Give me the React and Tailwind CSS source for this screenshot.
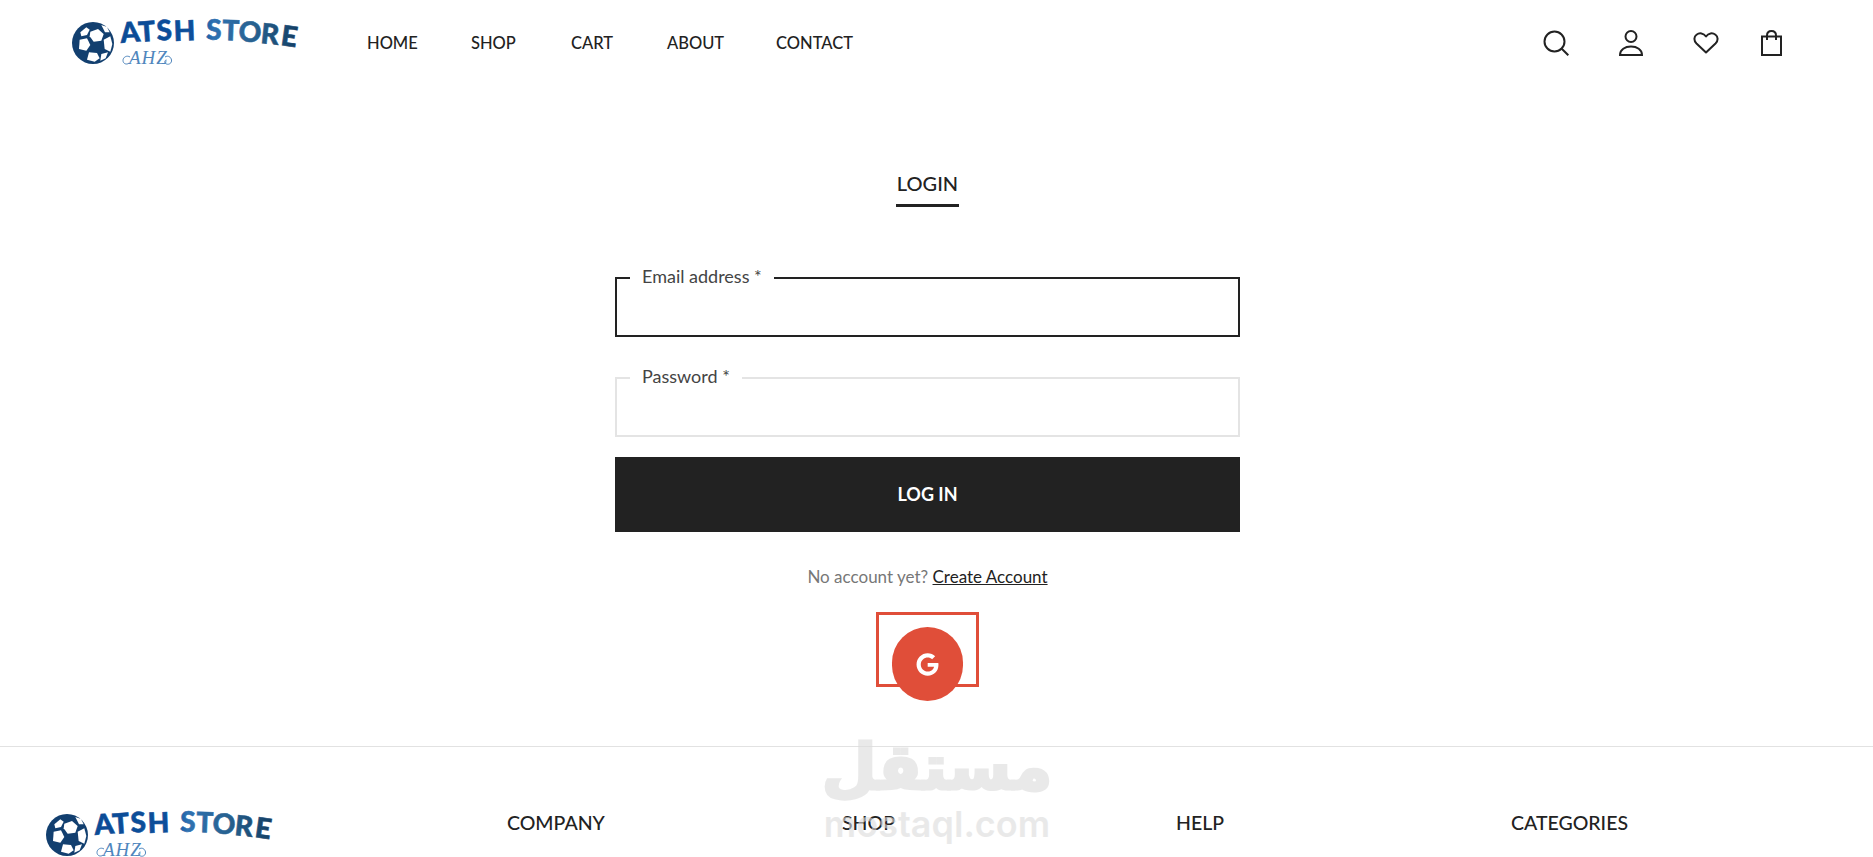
import { FaGoogle } from "react-icons/fa";

const Logo = ({ id, className }) => (
  <svg viewBox="0 0 240 60" className={className}>
    <defs>
      <linearGradient id={id} gradientUnits="userSpaceOnUse" x1="50" x2="230" y1="0" y2="0">
        <stop offset="0" stopColor="#0b4b96" />
        <stop offset="0.45" stopColor="#0d4f9b" />
        <stop offset="0.52" stopColor="#2f72b2" />
        <stop offset="0.75" stopColor="#27618f" />
        <stop offset="1" stopColor="#123d63" />
      </linearGradient>
    </defs>
    <circle cx="23" cy="30" r="21" fill="#123f6f" />
    <g transform="translate(23 30) scale(0.3333) translate(-80 -72)" fill="#fff">
      <polygon points="72,38 95,30 112,45 105,65 82,68 70,52" />
      <polygon points="42,40 60,25 70,32 62,48 45,52" />
      <polygon points="40,62 62,58 72,78 60,95 38,90" />
      <polygon points="68,100 92,102 100,118 85,128 62,122" />
      <polygon points="112,62 132,52 138,75 132,98 115,90" />
      <polygon points="105,18 122,24 130,40 116,40" />
      <polygon points="105,105 125,100 118,118 102,125" />
    </g>
    <text
      x="51 69 87 104 136 152 168 190 210"
      y="30 29 27.500 28 26.500 27 28 30 32"
      rotate="-5 -4 -3 -2 1 2 4 6 8"
      fill={`url(#${id})`}
      stroke={`url(#${id})`}
      strokeWidth="0.6"
      fontFamily="Lato, sans-serif"
      fontWeight="900"
      fontSize="28"
    >
      ATSHSTORE
    </text>
    <path
      d="M60 44c-3-2-7 0-7 3.500s4 4.500 6 2.500M95 44c3-2 6 0 6.500 3s-2.500 5-5 4-2-4 0-4"
      fill="none"
      stroke="#4f86bd"
      strokeWidth="1"
    />
    <text x="59" y="51" fill="#4f86bd" fontFamily="'Liberation Serif', serif" fontStyle="italic" fontSize="19" letterSpacing="1">
      AHZ
    </text>
  </svg>
);

const SearchIcon = () => (
  <svg width="26" height="26" viewBox="0 0 26 26" fill="none" stroke="#222" strokeWidth="2">
    <circle cx="11.500" cy="11.500" r="10" />
    <path d="M18.500 18.500l6.800 6.800" />
  </svg>
);

const UserIcon = () => (
  <svg width="24" height="26" viewBox="0 0 24 26" fill="none" stroke="#222" strokeWidth="2">
    <circle cx="12" cy="6.500" r="5.500" />
    <path d="M1 25c0-5.500 5-8.500 11-8.500s11 3 11 8.500z" />
  </svg>
);

const HeartIcon = () => (
  <svg width="26" height="22" viewBox="0 0 26 22" fill="none" stroke="#222" strokeWidth="2" strokeLinejoin="round">
    <path d="M13 20.500L3.500 11.500C0.500 8.500 1 4.500 3.500 2.700 6.500 0.500 10.500 1 13 4.500c2.500-3.500 6.500-4 9.500-1.800 2.500 1.800 3 5.800 0 8.800z" />
  </svg>
);

const BagIcon = () => (
  <svg width="21" height="26" viewBox="0 0 21 26" fill="none" stroke="#222" strokeWidth="2">
    <rect x="1" y="6.500" width="19" height="18.500" />
    <path d="M6 10V5.500C6 2.800 7.800 1 10.500 1S15 2.800 15 5.500V10" />
  </svg>
);

const navLinks = [
  { label: "HOME", cls: "w-[104px]" },
  { label: "SHOP", cls: "w-[100px]" },
  { label: "CART", cls: "w-[96px]" },
  { label: "ABOUT", cls: "w-[109px]" },
  { label: "CONTACT", cls: "" },
];

const Field = ({ label, active }) => (
  <div className={`relative h-[60px] border-2 ${active ? "border-[#222]" : "border-[#e4e4e4]"}`}>
    <span className="absolute left-[13px] -top-[15px] bg-white px-[12px] text-[18px] leading-[24px] text-[#444]">
      {label}
    </span>
  </div>
);

const App = () => {
  return (
    <div className="relative h-[857px] overflow-hidden bg-white font-['Lato',sans-serif] text-[#222]">
      {/* Header */}
      <header className="flex h-[86px] items-center pl-[70px] pr-[91px]">
        <Logo id="logoTop" className="h-[60px] w-[240px] shrink-0" />
        <nav className="ml-[57px] flex text-[16.500px] font-medium">
          {navLinks.map((link) => (
            <a key={link.label} href="#" className={link.cls}>
              {link.label}
            </a>
          ))}
        </nav>
        <div className="ml-auto flex items-center">
          <div className="flex w-[76px]"><SearchIcon /></div>
          <div className="flex w-[74px]"><UserIcon /></div>
          <div className="flex w-[68px]"><HeartIcon /></div>
          <BagIcon />
        </div>
      </header>

      {/* Login form */}
      <main className="flex h-[661px] flex-col items-center border-b border-[#e2e2e2] pr-[18px]">
        <div className="mt-[83px] w-[63px] border-b-[3px] border-[#222] pb-[7px] text-center text-[20px] leading-[28px] font-medium">
          LOGIN
        </div>
        <div className="mt-[70px] flex w-[625px] flex-col">
          <Field label="Email address *" active />
          <div className="mt-[40px]">
            <Field label="Password *" />
          </div>
          <button className="mt-[20px] h-[75px] bg-[#222] text-[18px] font-bold text-white">
            LOG IN
          </button>
          <p className="mt-[32px] text-center text-[17px] leading-[26px] text-[#777]">
            No account yet?{" "}
            <a href="#" className="text-[#222] underline">Create Account</a>
          </p>
          <div className="mt-[22px] flex justify-center">
            <div className="relative h-[75px] w-[103px] border-[3px] border-[#e04e39]">
              <div className="absolute left-[13px] top-[12px] flex h-[74px] w-[71px] items-center justify-center rounded-full bg-[#e04e39] text-white">
                <FaGoogle size={23} />
              </div>
            </div>
          </div>
        </div>
      </main>

      {/* Footer */}
      <footer className="relative flex pl-[44px] pt-[58px]">
        <Logo id="logoBottom" className="h-[60px] w-[240px] shrink-0" />
        <div className="ml-[223px] flex pt-[4px] text-[19.500px] leading-[28px] font-medium">
          <h4 className="w-[335px]">COMPANY</h4>
          <h4 className="w-[334px]">SHOP</h4>
          <h4 className="w-[335px]">HELP</h4>
          <h4>CATEGORIES</h4>
        </div>
      </footer>

      {/* Site watermark */}
      <div className="pointer-events-none absolute left-[825px] top-[731px] flex w-[224px] flex-col items-center text-[#dcdcdc] opacity-60">
        <span className="font-['DejaVu_Sans',sans-serif] text-[63px] leading-[74px] font-bold [-webkit-text-stroke:3px_#dcdcdc]">مستقل</span>
        <span className="font-['Inter',sans-serif] text-[36px] leading-[38px] font-semibold">mostaql.com</span>
      </div>
    </div>
  );
};

export default App;
